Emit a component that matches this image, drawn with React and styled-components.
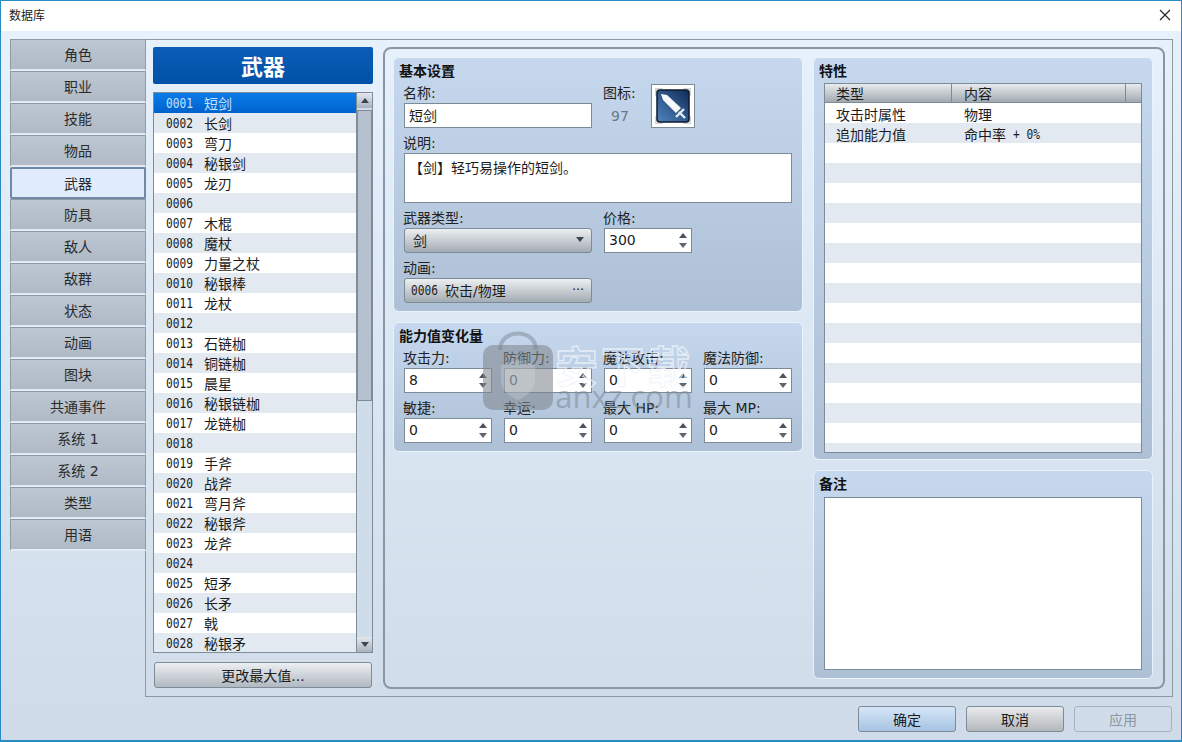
import React from "react";
import styled, { createGlobalStyle } from "styled-components";

const CJK = `"DejaVu Sans", "Noto Sans CJK SC", sans-serif`;
const MONO = `"DejaVu Sans Mono", monospace`;

const tabs = ["角色", "职业", "技能", "物品", "武器", "防具", "敌人", "敌群", "状态", "动画", "图块", "共通事件", "系统 1", "系统 2", "类型", "用语"];
const weapons = ["短剑", "长剑", "弯刀", "秘银剑", "龙刃", "", "木棍", "魔杖", "力量之杖", "秘银棒", "龙杖", "", "石链枷", "铜链枷", "晨星", "秘银链枷", "龙链枷", "", "手斧", "战斧", "弯月斧", "秘银斧", "龙斧", "", "短矛", "长矛", "戟", "秘银矛"];
const stats = [
  ["攻击力:", "8"],
  ["防御力:", "0"],
  ["魔法攻击:", "0"],
  ["魔法防御:", "0"],
  ["敏捷:", "0"],
  ["幸运:", "0"],
  ["最大 HP:", "0"],
  ["最大 MP:", "0"],
];
const traits = [
  ["攻击时属性", "物理"],
  ["追加能力值", ""],
];

const GlobalStyle = createGlobalStyle`
  html, body {
    margin: 0;
    padding: 0;
    background: #d0dce8;
  }
  * {
    box-sizing: border-box;
  }
`;

const Win = styled.div`
  width: 1182px;
  height: 742px;
  display: flex;
  flex-direction: column;
  overflow: hidden;
  border: 1px solid #2b8ac4;
  border-bottom-width: 2px;
  font-family: ${CJK};
  font-size: 14px;
  color: #1c1c1c;
  background: linear-gradient(#e7f2fd, #cfdbe8);
`;

const TitleBar = styled.div`
  flex-shrink: 0;
  height: 30px;
  display: flex;
  align-items: center;
  justify-content: space-between;
  padding: 0 10px 3px 8px;
  background: #ffffff;
  font-size: 12px;
  color: #222;
`;

const Body = styled.div`
  flex-shrink: 0;
  height: 658px;
  margin-top: 8px;
  padding-left: 9px;
  display: flex;
  align-items: flex-start;
`;

const TabColumn = styled.div`
  position: relative;
  z-index: 1;
  width: 136px;
  margin-right: -1px;
  display: flex;
  flex-direction: column;
`;

const Tab = styled.div`
  height: 32px;
  padding-bottom: 1px;
  display: flex;
  align-items: center;
  justify-content: center;
  color: #2a2a2a;
  ${(p) =>
    p.$active
      ? `
    background: #e0ecfb;
    border: 2px solid #6f8aa8;
    border-radius: 2px;
  `
      : `
    background: linear-gradient(#bdc7d2, #b0bac6);
    border: 1px solid #8e9aa7;
    border-bottom: 2px solid #e4eaf0;
    border-right-color: #8e9aa7;
  `}
`;

const MainPanel = styled.div`
  width: 1028px;
  height: 658px;
  padding: 7px;
  display: flex;
  gap: 10px;
  border: 1px solid #8b98a5;
`;

const ListColumn = styled.div`
  width: 220px;
  display: flex;
  flex-direction: column;
`;

const Heading = styled.div`
  height: 37px;
  padding-bottom: 2px;
  display: flex;
  align-items: center;
  justify-content: center;
  border-radius: 2px;
  background: linear-gradient(#0a5cb6, #0052a8);
  color: #ffffff;
  font-size: 22px;
  font-weight: bold;
`;

const ListBox = styled.div`
  height: 561px;
  margin-top: 8px;
  display: flex;
  overflow: hidden;
  background: #ffffff;
  border: 1px solid #7e8b98;
`;

const Rows = styled.div`
  width: 202px;
  flex-shrink: 0;
`;

const Row = styled.div`
  height: 20px;
  padding-left: 12px;
  display: flex;
  align-items: center;
  background: ${(p) => (p.$selected ? "linear-gradient(#0a7cea, #0062cc)" : p.$odd ? "#e2e9f0" : "#ffffff")};
  color: ${(p) => (p.$selected ? "#c4e0ff" : "#1c1c1c")};
`;

// the tall narrow digits of the original: DejaVu Mono squeezed to 4 chars in 27px
const Digits = styled.span`
  display: inline-block;
  flex-shrink: 0;
  width: ${(p) => p.$width || 27}px;
  margin-right: ${(p) => p.$gap || 0}px;
  margin-left: ${(p) => p.$lead || 0}px;
  font-family: ${MONO};
  font-size: 14px;
  line-height: 16px;
  white-space: pre;
  transform: scaleX(0.8);
  transform-origin: left center;
`;

const ScrollBar = styled.div`
  flex: 1;
  display: flex;
  flex-direction: column;
  border-left: 1px solid #7e8b98;
  background: #cfdcea;
`;

const ScrollBtn = styled.div`
  height: 15px;
  flex-shrink: 0;
  display: flex;
  align-items: center;
  justify-content: center;
  background: linear-gradient(#e4e8ec, #a9b2bc);
`;

const ScrollThumb = styled.div`
  height: 291px;
  margin-top: 2px;
  background: #b5c1cf;
  border: 1px solid #7e8b98;
`;

const ScrollRest = styled.div`
  flex: 1;
`;

const Triangle = styled.span`
  width: 0;
  height: 0;
  border-left: ${(p) => p.$size || 4}px solid transparent;
  border-right: ${(p) => p.$size || 4}px solid transparent;
  ${(p) => (p.$down ? "border-top" : "border-bottom")}: ${(p) => (p.$size || 4) + 1}px solid ${(p) => p.$color || "#3c4650"};
`;

const MaxButton = styled.div`
  height: 26px;
  margin: 9px 1px 0;
  display: flex;
  align-items: center;
  justify-content: center;
  border: 1px solid #7e8b98;
  border-radius: 3px;
  background: linear-gradient(#eceff2, #b1b8c0);
`;

const Frame = styled.div`
  width: 782px;
  height: 642px;
  padding: 8px 10px 8px 8px;
  display: flex;
  gap: 10px;
  border: 2px solid #8997a5;
  border-radius: 8px;
`;

const FrameColumn = styled.div`
  width: ${(p) => p.$width}px;
  display: flex;
  flex-direction: column;
  gap: 10px;
`;

const Group = styled.div`
  position: relative;
  height: ${(p) => p.$height}px;
  padding: 0 10px;
  border: 1px solid #eaf2fa;
  border-radius: 6px;
  background: linear-gradient(#c5d8ee, #adc0d6);
`;

const GroupTitle = styled.div`
  height: ${(p) => p.$height || 27}px;
  margin-left: -5px;
  padding-top: 4px;
  line-height: 18px;
  font-weight: bold;
  color: #111;
`;

const FieldGrid = styled.div`
  display: grid;
  grid-template-columns: repeat(4, 88px);
  column-gap: 12px;
  row-gap: 7px;
  align-items: end;
`;

const Field = styled.div`
  grid-column: span ${(p) => p.$span || 1};
  display: flex;
  flex-direction: column;
`;

const Label = styled.div`
  height: 18px;
  margin-left: -1px;
  line-height: 16px;
  font-size: 14px;
  color: #222;
  white-space: nowrap;
`;

const TextBox = styled.div`
  height: ${(p) => p.$height || 25}px;
  display: flex;
  align-items: ${(p) => (p.$multi ? "flex-start" : "center")};
  justify-content: space-between;
  padding: ${(p) => (p.$multi ? "3px 4px" : "0 4px 2px")};
  background: #ffffff;
  border: 1px solid #7d8a97;
`;

const SpinArrows = styled.div`
  margin-top: 2px;
  display: flex;
  flex-direction: column;
  gap: 5px;
`;

const IconField = styled.div`
  grid-column: span 2;
  display: flex;
  align-items: flex-end;
`;

const IconLabelCol = styled.div`
  width: 47px;
  display: flex;
  flex-direction: column;
`;

const IconNumber = styled.div`
  height: 25px;
  padding-left: 7px;
  display: flex;
  align-items: center;
  color: #6b7885;
`;

const IconBox = styled.div`
  width: 44px;
  height: 44px;
  display: flex;
  align-items: center;
  justify-content: center;
  background: #ffffff;
  border: 1px solid #7d8a97;
`;

const SelectBox = styled.div`
  height: 25px;
  display: flex;
  align-items: center;
  justify-content: space-between;
  padding: 0 ${(p) => (p.$anim ? "5px" : "7px")} 2px ${(p) => (p.$anim ? "6px" : "8px")};
  border: 1px solid #7d8a97;
  border-radius: 3px;
  background: linear-gradient(#edf0f2, #a3abb3);
`;

const AnimName = styled.span`
  display: flex;
  align-items: center;
`;

const Dots = styled.span`
  font-family: ${MONO};
  font-size: 11px;
  letter-spacing: -2.5px;
  padding-right: 3px;
`;

const Table = styled.div`
  height: 370px;
  overflow: hidden;
  background: #ffffff;
  border-left: 1px solid #7d8a97;
  border-right: 1px solid #7d8a97;
  border-bottom: 1px solid #7d8a97;
`;

const TableHead = styled.div`
  height: 20px;
  display: flex;
  background: linear-gradient(#e8ebee, #a1a9b1);
  border-top: 1px solid #7d8a97;
  border-bottom: 1px solid #7d8a97;
`;

const HeadCell = styled.div`
  width: ${(p) => p.$width}px;
  flex: ${(p) => (p.$width ? "none" : 1)};
  padding-left: ${(p) => p.$pad || 11}px;
  line-height: 20px;
  border-right: ${(p) => (p.$width ? "1px solid #7d8a97" : "none")};
`;

const TableRow = styled.div`
  height: 20px;
  padding-top: 2px;
  display: flex;
  align-items: center;
  background: ${(p) => (p.$odd ? "#e2e9f0" : "#ffffff")};
`;

const TypeCell = styled.div`
  width: 139px;
  padding-left: 11px;
`;

const ContentCell = styled.div`
  flex: 1;
  display: flex;
  align-items: center;
`;

const NotesBox = styled.div`
  height: 173px;
  background: #ffffff;
  border: 1px solid #7d8a97;
`;

const Footer = styled.div`
  flex: 1;
  padding: 9px 9px 0 0;
  display: flex;
  justify-content: flex-end;
  align-items: flex-start;
  gap: 10px;
`;

const FooterButton = styled.div`
  width: 98px;
  height: 26px;
  display: flex;
  align-items: center;
  justify-content: center;
  border-radius: 3px;
  border: 1px solid ${(p) => (p.$disabled ? "#a4b1be" : "#7d8a97")};
  color: ${(p) => (p.$disabled ? "#8a96a3" : "#1c1c1c")};
  background: ${(p) =>
    p.$disabled
      ? "transparent"
      : p.$primary
      ? "linear-gradient(#d6e6f8, #a6c3e2)"
      : "linear-gradient(#e9ebed, #b3b7bb)"};
`;

// site watermark laid over the stats group
const Watermark = styled.div`
  position: absolute;
  left: 89px;
  top: 7px;
  display: flex;
  pointer-events: none;
`;

const WatermarkText = styled.div`
  margin-left: 2px;
  display: flex;
  flex-direction: column;
  align-items: center;
`;

const WatermarkCn = styled.div`
  height: 38px;
  margin-top: 13px;
  font-family: "Noto Sans CJK SC", sans-serif;
  font-size: 43px;
  line-height: 42px;
  font-weight: bold;
  letter-spacing: 3px;
  color: transparent;
  -webkit-text-stroke: 1.3px rgba(240, 245, 250, 0.8);
  white-space: nowrap;
`;

const WatermarkEn = styled.div`
  font-family: "Open Sans", sans-serif;
  font-size: 31px;
  line-height: 30px;
  color: rgba(125, 135, 148, 0.55);
`;

function SwordIcon() {
  return (
    <svg width="36" height="36" viewBox="0 0 36 36">
      <defs>
        <linearGradient id="swordBg" x1="1" y1="0" x2="0" y2="1">
          <stop offset="0" stopColor="#0f2a56" />
          <stop offset="1" stopColor="#4f86c0" />
        </linearGradient>
      </defs>
      <path d="M0 0 H8 V2 H2 V8 H0 Z M28 0 H36 V8 H34 V2 H28 Z M0 28 H2 V34 H8 V36 H0 Z M34 28 H36 V36 H28 V34 H34 Z" fill="#d6d6d6" />
      <rect x="2" y="2" width="32" height="32" rx="3" fill="url(#swordBg)" stroke="#0c1a2c" strokeWidth="1.5" />
      <path d="M6 6 L12 7 L26 20 L21 25 L8 12 Z" fill="#f6f9fb" />
      <path d="M21 29 L29 21" stroke="#e4ebf1" strokeWidth="2.4" fill="none" />
      <path d="M24 24 L30 30" stroke="#e4ebf1" strokeWidth="2.4" fill="none" />
    </svg>
  );
}

function Spin({ value }) {
  return (
    <TextBox>
      <span>{value}</span>
      <SpinArrows>
        <Triangle $color="#4a545e" />
        <Triangle $down $color="#5d6770" />
      </SpinArrows>
    </TextBox>
  );
}

export default function App() {
  return (
    <Win>
      <GlobalStyle />
      <TitleBar>
        <span>数据库</span>
        <svg width="12" height="12" viewBox="0 0 12 12">
          <path d="M1 1 L11 11 M11 1 L1 11" stroke="#222" strokeWidth="1.1" fill="none" />
        </svg>
      </TitleBar>
      <Body>
        <TabColumn>
          {tabs.map((t) => (
            <Tab key={t} $active={t === "武器"}>
              {t}
            </Tab>
          ))}
        </TabColumn>
        <MainPanel>
          <ListColumn>
            <Heading>武器</Heading>
            <ListBox>
              <Rows>
                {weapons.map((w, i) => (
                  <Row key={i} $selected={i === 0} $odd={i % 2 === 1}>
                    <Digits $gap={11}>{String(i + 1).padStart(4, "0")}</Digits>
                    <span>{w}</span>
                  </Row>
                ))}
              </Rows>
              <ScrollBar>
                <ScrollBtn>
                  <Triangle />
                </ScrollBtn>
                <ScrollThumb />
                <ScrollRest />
                <ScrollBtn>
                  <Triangle $down />
                </ScrollBtn>
              </ScrollBar>
            </ListBox>
            <MaxButton>更改最大值...</MaxButton>
          </ListColumn>
          <Frame>
            <FrameColumn $width={410}>
              <Group $height={255}>
                <GroupTitle $height={26}>基本设置</GroupTitle>
                <FieldGrid>
                  <Field $span={2}>
                    <Label>名称:</Label>
                    <TextBox>短剑</TextBox>
                  </Field>
                  <IconField>
                    <IconLabelCol>
                      <Label>图标:</Label>
                      <IconNumber>97</IconNumber>
                    </IconLabelCol>
                    <IconBox>
                      <SwordIcon />
                    </IconBox>
                  </IconField>
                  <Field $span={4}>
                    <Label>说明:</Label>
                    <TextBox $multi $height={50}>
                      【剑】轻巧易操作的短剑。
                    </TextBox>
                  </Field>
                  <Field $span={2}>
                    <Label>武器类型:</Label>
                    <SelectBox>
                      <span>剑</span>
                      <Triangle $down $color="#3c4650" />
                    </SelectBox>
                  </Field>
                  <Field>
                    <Label>价格:</Label>
                    <Spin value="300" />
                  </Field>
                  <Field $span={2}>
                    <Label>动画:</Label>
                    <SelectBox $anim>
                      <AnimName>
                        <Digits $gap={7}>0006</Digits>
                        砍击/物理
                      </AnimName>
                      <Dots>···</Dots>
                    </SelectBox>
                  </Field>
                </FieldGrid>
              </Group>
              <Group $height={130}>
                <GroupTitle>能力值变化量</GroupTitle>
                <FieldGrid>
                  {stats.map(([label, value]) => (
                    <Field key={label}>
                      <Label>{label}</Label>
                      <Spin value={value} />
                    </Field>
                  ))}
                </FieldGrid>
                <Watermark>
                  <svg width="70" height="80" viewBox="0 0 70 80">
                    <path d="M17 20 C17 -2 53 -2 53 20" fill="none" stroke="rgba(125,135,148,0.5)" strokeWidth="4" />
                    <rect x="0" y="15" width="70" height="65" rx="10" fill="rgba(128,134,142,0.58)" />
                    <path d="M35 30 L52 35 L52 50 C52 60 44 66 35 70 C26 66 18 60 18 50 L18 35 Z" fill="rgba(215,222,230,0.28)" />
                  </svg>
                  <WatermarkText>
                    <WatermarkCn>安下载</WatermarkCn>
                    <WatermarkEn>anxz.com</WatermarkEn>
                  </WatermarkText>
                </Watermark>
              </Group>
            </FrameColumn>
            <FrameColumn $width={340}>
              <Group $height={403}>
                <GroupTitle $height={25}>特性</GroupTitle>
                <Table>
                  <TableHead>
                    <HeadCell $width={127}>类型</HeadCell>
                    <HeadCell $width={174} $pad={12}>内容</HeadCell>
                    <HeadCell />
                  </TableHead>
                  {Array.from({ length: 18 }).map((_, i) => (
                    <TableRow key={i} $odd={i % 2 === 1}>
                      <TypeCell>{traits[i]?.[0]}</TypeCell>
                      <ContentCell>
                        {i === 1 ? (
                          <>
                            命中率
                            <Digits $lead={7}>+ 0%</Digits>
                          </>
                        ) : (
                          traits[i]?.[1]
                        )}
                      </ContentCell>
                    </TableRow>
                  ))}
                </Table>
              </Group>
              <Group $height={209}>
                <GroupTitle $height={26}>备注</GroupTitle>
                <NotesBox />
              </Group>
            </FrameColumn>
          </Frame>
        </MainPanel>
      </Body>
      <Footer>
        <FooterButton $primary>确定</FooterButton>
        <FooterButton>取消</FooterButton>
        <FooterButton $disabled>应用</FooterButton>
      </Footer>
    </Win>
  );
}
